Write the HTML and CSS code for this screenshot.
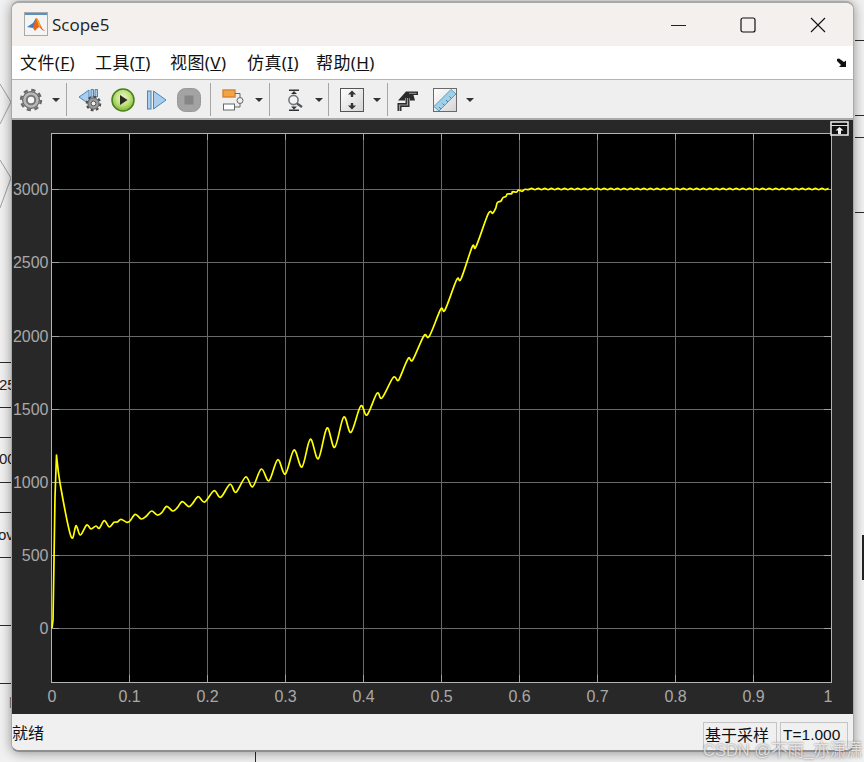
FILE: index.html
```html
<!DOCTYPE html>
<html lang="en">
<head>
  <meta charset="UTF-8" />
  <title>Scope5</title>
  <link rel="stylesheet" href="styles.css">
</head>
<body>

  <!-- the Simulink model behind the scope window -->
  <svg class="model" width="864" height="762" viewBox="0 0 864 762">
    <path class="block-edge" d="M0 84L11 102L0 124M0 160L11 178L0 208" />
    <path class="wire" d="M0 362.5H12M0 407.5H12M0 437.5H12M0 482.5H12M0 512.5H12M0 557.5H12M0 625.5H12M0 683.5H12M855 40.5H864M855 115.5H864M855 137.5H864M855 212.5H864M255.5 751V762" />
    <rect class="wire-bar" x="862" y="535" width="2" height="45" />
    <text class="model-text" x="-1" y="390">25</text>
    <text class="model-text" x="-1" y="464">00</text>
    <text class="model-text" x="-2" y="540">ov</text>
    <text class="model-text model-text-pale" x="9" y="705">p</text>
  </svg>

  <div class="window">
    <header class="titlebar">
      <svg class="app-icon" width="24" height="24" viewBox="0 0 24 24">
        <rect x="0.5" y="0.5" width="23" height="23" fill="#f4f4f4" stroke="#a8a8a8" />
        <rect x="1" y="1" width="22" height="2" fill="#5b8fc0" />
        <path d="M3 15L9 11L12 6L15 12L9 16Z" fill="#3a7fc4" />
        <path d="M9 16L12 6C14 6 15 10 17 14C18 16 19 18 21 19C18 19 17 16 15 15C13 16 12 18 11 19Z" fill="#e8641c" />
        <path d="M12 6C14 6 15 10 17 14L15 15C14 12 13 8 12 6Z" fill="#f5a623" />
      </svg>
      <span class="title">Scope5</span>
      <div class="win-controls">
        <button class="win-btn">
          <svg width="16" height="16" viewBox="0 0 16 16"><path d="M1 8.5H16" stroke="#222" fill="none" /></svg>
        </button>
        <button class="win-btn">
          <svg width="16" height="16" viewBox="0 0 16 16"><rect x="1" y="1" width="14" height="14" rx="2" stroke="#111" stroke-width="1.2" fill="none" /></svg>
        </button>
        <button class="win-btn">
          <svg width="16" height="16" viewBox="0 0 16 16"><path d="M1 1L15 15M15 1L1 15" stroke="#111" stroke-width="1.1" fill="none" /></svg>
        </button>
      </div>
    </header>

    <nav class="menubar">
      <a class="menu-item">文件(<u>F</u>)</a>
      <a class="menu-item">工具(<u>T</u>)</a>
      <a class="menu-item">视图(<u>V</u>)</a>
      <a class="menu-item">仿真(<u>I</u>)</a>
      <a class="menu-item">帮助(<u>H</u>)</a>
      <svg class="dock-arrow" width="12" height="10" viewBox="0 0 12 10">
        <path d="M1 1L3 0.5L8 4L10 2.5V9H3L5 7L1 3Z" fill="#111" />
      </svg>
    </nav>

    <div class="toolbar">
      <div class="tool-group group-settings">
        <svg class="tool" viewBox="0 0 24 24">
          <circle cx="12" cy="12" r="10" fill="none" stroke="#6a6a6a" stroke-width="2.4" stroke-dasharray="4.2 3.65" />
          <circle cx="12" cy="12" r="8.4" fill="#b8b8b8" stroke="#666" stroke-width="1.2" />
          <circle cx="12" cy="12" r="4.2" fill="#f6f6f6" stroke="#777" stroke-width="2" />
        </svg>
        <i class="caret"></i>
      </div>

      <div class="tool-group group-sim">
        <svg class="tool" viewBox="0 0 24 24">
          <path d="M1 9L11 2V16Z" fill="#a9cdea" stroke="#4a86ba" />
          <path d="M13 1.5H15.5V9H13ZM17 1.5H19.5V9H17Z" fill="#a9cdea" stroke="#4a86ba" />
          <circle cx="15.5" cy="15.5" r="6.8" fill="none" stroke="#4c4c4c" stroke-width="2" stroke-dasharray="2.8 2.5" />
          <circle cx="15.5" cy="15.5" r="5.6" fill="#9b9b9b" stroke="#555" />
          <circle cx="15.5" cy="15.5" r="2.4" fill="#eee" stroke="#555" />
        </svg>
        <svg class="tool" viewBox="0 0 24 24">
          <defs>
            <radialGradient id="run-fill" cx="50%" cy="40%" r="60%">
              <stop offset="0" stop-color="#eef7cf" />
              <stop offset="0.55" stop-color="#c0e07e" />
              <stop offset="1" stop-color="#7db52f" />
            </radialGradient>
          </defs>
          <circle cx="12" cy="12" r="11" fill="url(#run-fill)" stroke="#47801c" stroke-width="1.5" />
          <path d="M9 7L16.5 12L9 17Z" fill="#2b2b20" />
        </svg>
        <svg class="tool" viewBox="0 0 24 24">
          <rect x="3.5" y="3" width="3.5" height="18" fill="#a9cdea" stroke="#4a86ba" />
          <path d="M9.5 3L22 12L9.5 21Z" fill="#a9cdea" stroke="#4a86ba" />
        </svg>
        <svg class="tool" viewBox="0 0 24 24">
          <rect x="0.5" y="0.5" width="23" height="23" rx="8" fill="#a3a3a3" stroke="#999" />
          <rect x="7.5" y="7.5" width="9" height="9" fill="#868686" />
        </svg>
      </div>

      <div class="tool-group group-blocks">
        <svg class="tool" viewBox="0 0 24 24">
          <rect x="2" y="2" width="12" height="7" fill="#f2a444" stroke="#d9822b" stroke-width="1.4" />
          <path d="M14 5.5H19V10M14 19H19V15" fill="none" stroke="#666" />
          <rect x="2.5" y="16" width="11" height="6" fill="#fff" stroke="#666" />
          <circle cx="19" cy="12.5" r="3" fill="#eee" stroke="#666" />
        </svg>
        <i class="caret"></i>
      </div>

      <div class="tool-group group-zoom">
        <svg class="tool" viewBox="0 0 24 24">
          <path d="M7 1.5H17V3H7ZM7 21.5H17V23H7ZM9 6L12 3L15 6ZM9 18.5L12 21.5L15 18.5Z" fill="#333" />
          <circle cx="11.5" cy="12" r="4.6" fill="#f0f4f6" stroke="#777" stroke-width="1.6" />
          <path d="M15 15.5L20 19" stroke="#555" stroke-width="2.2" fill="none" />
        </svg>
        <i class="caret"></i>
      </div>

      <div class="tool-group group-scale">
        <svg class="tool" viewBox="0 0 24 24">
          <defs>
            <linearGradient id="box-fill" x1="0" y1="0" x2="1" y2="1">
              <stop offset="0" stop-color="#ffffff" />
              <stop offset="1" stop-color="#d4d4d4" />
            </linearGradient>
          </defs>
          <rect x="0.5" y="0.5" width="23" height="23" fill="url(#box-fill)" stroke="#555" />
          <path d="M8 6.5L12 2.5L16 6.5H13.2V9H10.8V6.5ZM8 17.5L12 21.5L16 17.5H13.2V15H10.8V17.5Z" fill="#333" />
        </svg>
        <i class="caret"></i>
      </div>

      <div class="tool-group group-measure">
        <svg class="tool" viewBox="0 0 24 24">
          <path d="M4.5 23V17H12.5V9" fill="none" stroke="#2b2b2b" stroke-width="4" />
          <path d="M4.5 23V17H12.5V9" fill="none" stroke="#9a9a9a" stroke-width="1.2" />
          <path d="M3 12.5L11 3.5H23V7H18.5L20 12.5H15V10H10V12.5Z" fill="#2b2b2b" />
          <path d="M14 5.3H21.5" fill="none" stroke="#9a9a9a" stroke-width="1" />
        </svg>
        <svg class="tool" viewBox="0 0 24 24">
          <rect x="0.5" y="0.5" width="23" height="23" fill="url(#box-fill)" stroke="#6a6a6a" />
          <path d="M1 18.5L18 1.5L23 6L6 23Z" fill="#9fd0e8" stroke="#5d9dbf" />
          <path d="M6 19L8 21M9.5 15.5L11.5 17.5M13 12L15 14M16.5 8.5L18.5 10.5" stroke="#3f7f9f" fill="none" />
        </svg>
        <i class="caret"></i>
      </div>
    </div>

    <div class="plot-panel">
      <!-- viewBox is in screenshot pixels, so the numbers below read as page coordinates -->
      <svg class="plot" width="841" height="594" viewBox="12 120 841 594">
        <rect class="plot-bg" x="52" y="133" width="779" height="549" />
        <path class="grid" d="M129.5 133V682M207.5 133V682M285.5 133V682M363.5 133V682M441.5 133V682M519.5 133V682M597.5 133V682M675.5 133V682M753.5 133V682" />
        <path class="grid" d="M52 189.5H831M52 262.5H831M52 336.5H831M52 409.5H831M52 482.5H831M52 555.5H831M52 628.5H831" />
        <path class="ticks" d="M52 189.5H59M52 262.5H59M52 336.5H59M52 409.5H59M52 482.5H59M52 555.5H59M52 628.5H59M824 189.5H831M824 262.5H831M824 336.5H831M824 409.5H831M824 482.5H831M824 555.5H831M824 628.5H831M129.5 675V682M207.5 675V682M285.5 675V682M363.5 675V682M441.5 675V682M519.5 675V682M597.5 675V682M675.5 675V682M753.5 675V682M129.5 133V140M207.5 133V140M285.5 133V140M363.5 133V140M441.5 133V140M519.5 133V140M597.5 133V140M675.5 133V140M753.5 133V140" />
        <rect class="plot-frame" x="51.5" y="133.5" width="780" height="549" />
        <path id="trace" class="trace" d="" />

        <g class="y-labels">
          <text x="48.5" y="195">3000</text>
          <text x="48.5" y="268">2500</text>
          <text x="48.5" y="342">2000</text>
          <text x="48.5" y="415">1500</text>
          <text x="48.5" y="488">1000</text>
          <text x="48.5" y="561">500</text>
          <text x="48.5" y="634">0</text>
        </g>
        <g class="x-labels">
          <text x="52" y="702">0</text>
          <text x="129.5" y="702">0.1</text>
          <text x="207.5" y="702">0.2</text>
          <text x="285.5" y="702">0.3</text>
          <text x="363.5" y="702">0.4</text>
          <text x="441.5" y="702">0.5</text>
          <text x="519.5" y="702">0.6</text>
          <text x="597.5" y="702">0.7</text>
          <text x="675.5" y="702">0.8</text>
          <text x="753.5" y="702">0.9</text>
          <text x="828" y="702">1</text>
        </g>
      </svg>

      <button class="undock">
        <svg width="19" height="15" viewBox="0 0 19 15">
          <rect x="1" y="1" width="17" height="13" fill="#111" stroke="#eee" stroke-width="1.5" />
          <path d="M1 4.5H18" stroke="#ddd" fill="none" />
          <path d="M5.5 9.5L9.5 6L13.5 9.5H11V13H8V9.5Z" fill="#f2f2f2" />
        </svg>
      </button>
    </div>

    <footer class="statusbar">
      <span class="status-text">就绪</span>
      <span class="status-box status-mode">基于采样</span>
      <span class="status-box status-time">T=1.000</span>
    </footer>
  </div>

  <div class="watermark">CSDN @不雨_亦潇潇</div>

  <script src="script.js"></script>
</body>
</html>
```

FILE: styles.css
```css
* {
  box-sizing: border-box;
}

html, body {
  height: 100%;
}

body {
  margin: 0;
  position: relative;
  overflow: hidden;
  background: #f1f1f1;
  font-family: "Noto Sans", "Noto Sans CJK SC", sans-serif;
  color: #111;
}

/* model behind the window */
.model {
  position: absolute;
  left: 0;
  top: 0;
}

.block-edge {
  fill: none;
  stroke: #a0a0a0;
}

.wire {
  fill: none;
  stroke: #2a2a2a;
}

.wire-bar {
  fill: #222;
}

.model-text {
  font-family: "Liberation Sans", sans-serif;
  font-size: 15px;
  fill: #222;
}

.model-text-pale {
  fill: #777;
}

/* window */
.window {
  position: relative;
  width: 843px;
  height: 751px;
  margin: 1px 0 0 11px;
  display: flex;
  flex-direction: column;
  border: 1px solid #a9a9a9;
  border-top-width: 2px;
  border-bottom: 2px solid #8f8f8f;
  border-radius: 8px;
  overflow: hidden;
  background: #f0f0f0;
  box-shadow: 0 1px 12px rgba(0, 0, 0, 0.4);
}

.titlebar {
  height: 43px;
  display: flex;
  align-items: center;
  padding-left: 12px;
  background: #f3f0ee;
}

.app-icon {
  margin-top: -1px;
}

.title {
  margin-left: 4px;
  font-family: "Open Sans", sans-serif;
  font-size: 17px;
  color: #222;
}

.win-controls {
  margin-left: auto;
  display: flex;
}

.win-btn {
  width: 70px;
  height: 43px;
  padding: 0;
  border: none;
  background: none;
  display: flex;
  align-items: center;
  justify-content: center;
}

.menubar {
  height: 34px;
  display: flex;
  align-items: center;
  padding-left: 8px;
  background: #fff;
  border-bottom: 1px solid #b4b4b4;
  position: relative;
}

.menu-item {
  width: 75px;
  font-size: 17px;
  line-height: 20px;
  letter-spacing: 0.4px;
  color: #111;
}

.menu-item:nth-child(3) {
  width: 77px;
}

.menu-item:nth-child(4) {
  width: 69px;
}

.dock-arrow {
  margin-left: auto;
  margin-right: 5px;
}

.toolbar {
  height: 40px;
  display: flex;
  background: #efefef;
  border-bottom: 2px solid #ababab;
}

.tool-group {
  display: flex;
  align-items: center;
  height: 33px;
  margin-top: 3px;
  border-right: 1px solid #a6a6a6;
}

.tool {
  width: 24px;
  height: 24px;
  flex: none;
}

.caret {
  flex: none;
  width: 0;
  height: 0;
  margin: 0 0 0 1px;
  border-left: 4px solid transparent;
  border-right: 4px solid transparent;
  border-top: 4px solid #333;
}

.group-settings {
  width: 55px;
  padding-left: 7px;
  gap: 8px;
}

.group-sim {
  width: 144px;
  padding-left: 11px;
  gap: 9px;
}

.group-blocks {
  width: 59px;
  padding-left: 10px;
  gap: 9px;
}

.group-zoom {
  width: 59px;
  padding-left: 12px;
  gap: 8px;
}

.group-scale {
  width: 59px;
  padding-left: 11px;
  gap: 8px;
}

.group-measure {
  padding-left: 7px;
  gap: 14px;
  border-right: none;
}

.group-measure .caret {
  margin-left: -5px;
}

/* plot */
.plot-panel {
  position: relative;
  height: 594px;
  background: #282828;
}

.plot {
  display: block;
}

.plot-bg {
  fill: #000;
}

.grid {
  fill: none;
  stroke: #6a6a6a;
}

.ticks {
  fill: none;
  stroke: #a0a0a0;
}

.plot-frame {
  fill: none;
  stroke: #b4b4b4;
}

.trace {
  fill: none;
  stroke: #ffff00;
  stroke-width: 1.7;
  stroke-linejoin: round;
}

.y-labels text,
.x-labels text {
  font-family: "Liberation Sans", sans-serif;
  font-size: 16px;
  fill: #a8a8a8;
}

.y-labels text {
  text-anchor: end;
}

.x-labels text {
  text-anchor: middle;
}

.undock {
  position: absolute;
  left: 818px;
  top: 1px;
  width: 19px;
  height: 15px;
  padding: 0;
  border: none;
  background: none;
  display: block;
}

.undock svg {
  display: block;
}

.statusbar {
  flex: 1;
  display: flex;
  align-items: center;
  padding-right: 5px;
  gap: 3px;
  background: #f0f0f0;
  font-size: 16px;
}

.status-text {
  margin-right: auto;
}

.status-box {
  height: 26px;
  margin-top: 6px;
  line-height: 24px;
  border: 1px solid #c4c4c4;
  border-bottom: none;
  white-space: nowrap;
}

.status-mode {
  width: 74px;
  padding-left: 1px;
}

.status-time {
  width: 68px;
  padding-left: 2px;
  font-family: "Liberation Sans", sans-serif;
  font-size: 15.5px;
}

.watermark {
  position: absolute;
  left: 703px;
  top: 737px;
  font-family: "Liberation Sans", "Noto Sans CJK SC", sans-serif;
  font-size: 16.5px;
  white-space: nowrap;
  color: rgba(255, 255, 255, 0.72);
  text-shadow: 0 0 2px rgba(80, 80, 80, 0.8);
}
```

FILE: script.js
```js
// peaks and troughs of the speed trace, read off the plot (page pixels)
const points = [
  [56.5,455],[60,483],[71,536.5],[76,525.7],[80.3,535],[86.7,525],[91,529],[96,526],[99.3,528.3],
  [104.3,520.7],[109.3,527],[114,522.3],[117.3,522],[121,519.3],[126.7,522.3],[130,521],[135.3,514.3],
  [141.3,519],[146.7,515.7],[151.7,511],[157.3,515],[161.7,512.7],[166.7,506.3],[172.7,511],[177.3,507.7],
  [182.3,501.7],[188.7,506.7],[192.7,503.3],[198.3,496.7],[204.7,502],[214,490.7],[220.7,497.3],[230,484.3],
  [236,492.3],[245.7,477],[252.7,486.7],[261.3,469],[269,480.7],[277.7,459.7],[285.3,474],[294,450],
  [302,467],[310.3,439.3],[318.3,458.7],[327,428],[334.7,447.3],[343.7,417],[351,432.3],[360.7,406],
  [367,415],[377,393.3],[382,398],[393,377.7],[397.7,380.7],[400,377.3],[408.3,358.3],[412.7,360],
  [424,335.7],[429.3,336.3],[440.7,309.3],[445,310],[456.7,279.7],[461,279],[472.3,246.7],[476,246.7],
  [488.3,213.7],[492.7,213.3],[495.7,208.3],[497.3,202.7],[501,201],[502.7,198],[506,196.3],[507.3,194],
  [511.7,193.7],[512.3,191.7],[516.7,192],[518.3,190],[522,191.3],[525,189.3]
];

// settled part: small ripple around 3000
for (let x = 528.3, up = false; x < 831; x += 3.3, up = !up) {
  points.push([x, up ? 188.4 : 189.7]);
}

function smoothPath(pts) {
  let d = `M52 628L53 620L54 560L55 497L${pts[0][0]} ${pts[0][1]}`;
  for (let i = 0; i < pts.length - 1; i++) {
    const p0 = pts[i - 1] || pts[i];
    const p1 = pts[i];
    const p2 = pts[i + 1];
    const p3 = pts[i + 2] || p2;
    const c1x = p1[0] + (p2[0] - p0[0]) / 6;
    const c1y = p1[1] + (p2[1] - p0[1]) / 6;
    const c2x = p2[0] - (p3[0] - p1[0]) / 6;
    const c2y = p2[1] - (p3[1] - p1[1]) / 6;
    d += `C${c1x.toFixed(1)} ${c1y.toFixed(1)} ${c2x.toFixed(1)} ${c2y.toFixed(1)} ${p2[0].toFixed(1)} ${p2[1].toFixed(1)}`;
  }
  return d;
}

document.getElementById('trace').setAttribute('d', smoothPath(points));
```
